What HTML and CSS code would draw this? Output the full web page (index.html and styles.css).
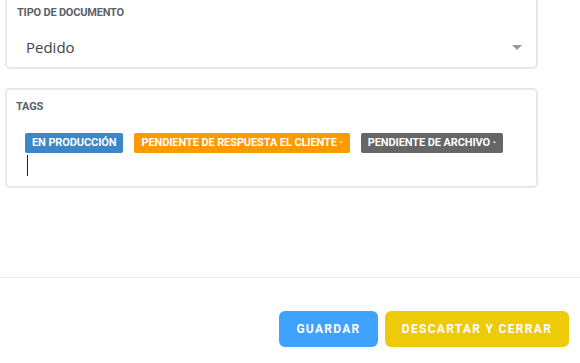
FILE: index.html
```html
<!DOCTYPE html>
<html lang="es">
<head>
    <meta charset="UTF-8">
    <title>Documento</title>
    <link rel="stylesheet" href="styles.css">
</head>
<body>
    <div class="form">
        <div class="field field-top">
            <div class="field-label">TIPO DE DOCUMENTO</div>
            <div class="select">
                <span>Pedido</span>
                <span class="caret"></span>
            </div>
        </div>

        <div class="field field-tags">
            <div class="field-label">TAGS</div>
            <div class="tags">
                <span class="tag tag-blue">EN PRODUCCIÓN</span>
                <span class="tag tag-orange">PENDIENTE DE RESPUESTA EL CLIENTE ·</span>
                <span class="tag tag-gray">PENDIENTE DE ARCHIVO ·</span>
            </div>
            <div class="cursor"></div>
        </div>
    </div>

    <div class="footer">
        <button class="btn btn-save">GUARDAR</button>
        <button class="btn btn-discard">DESCARTAR Y CERRAR</button>
    </div>
</body>
</html>
```

FILE: styles.css
```css
body {
    margin: 0;
    font-family: "Roboto", "Liberation Sans", sans-serif;
    background: #fff;
    color: #444;
}

.form {
    padding: 0 42px 0 5px;
    display: flex;
    flex-direction: column;
    gap: 19px;
}

.field {
    border: 2px solid #e6e9ec;
    border-radius: 5px;
    background: #fff;
}

.field-top {
    border-top: none;
    border-radius: 0 0 5px 5px;
    height: 67px;
    padding: 0 0 0 10px;
}

.field-label {
    font-size: 11px;
    font-weight: 700;
    color: #59616b;
    letter-spacing: -0.2px;
}

.field-top .field-label {
    padding-top: 6px;
}

.select {
    display: flex;
    align-items: center;
    justify-content: space-between;
    margin-top: 18px;
    padding: 0 14px 0 9px;
    font-family: "Open Sans", sans-serif;
    font-size: 15px;
    color: #444;
}

.caret {
    width: 0;
    height: 0;
    border-left: 5px solid transparent;
    border-right: 5px solid transparent;
    border-top: 5px solid #999;
}

.field-tags {
    height: 96px;
    padding: 0 0 0 9px;
}

.field-tags .field-label {
    padding-top: 10px;
}

.tags {
    display: flex;
    gap: 11px;
    margin-top: 20px;
    padding-left: 9px;
}

.tag {
    display: inline-block;
    height: 20px;
    line-height: 20px;
    padding: 0 7px;
    border-radius: 2px;
    color: #fff;
    font-size: 11px;
    font-weight: 700;
    letter-spacing: -0.1px;
}

.tag-blue { background: #3d86c8; }
.tag-orange { background: #ff9900; }
.tag-gray { background: #666; }

.cursor {
    width: 1px;
    height: 21px;
    background: #222;
    margin: 2px 0 0 11px;
}

.footer {
    margin-top: 89px;
    border-top: 1px solid #e8e8e8;
    display: flex;
    justify-content: flex-end;
    gap: 7px;
    padding: 33px 11px 0 0;
}

.btn {
    height: 36px;
    border: none;
    border-radius: 6px;
    color: #fff;
    font-family: "Roboto", sans-serif;
    font-weight: 700;
    font-size: 12px;
    letter-spacing: 1.3px;
    cursor: pointer;
}

.btn-save {
    width: 99px;
    background: #3fa2ff;
}

.btn-discard {
    width: 184px;
    background: #eecb08;
}
```
